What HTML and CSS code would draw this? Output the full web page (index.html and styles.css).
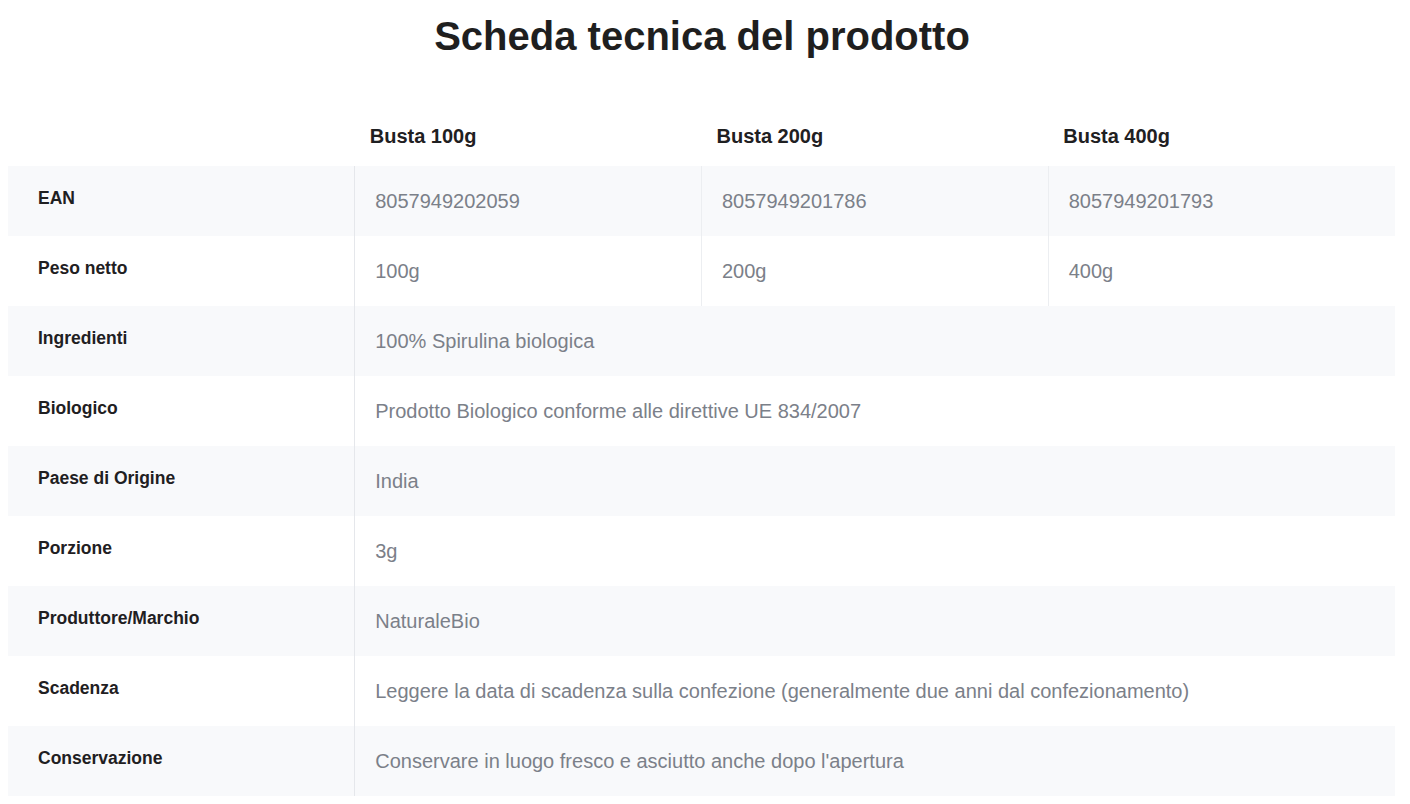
FILE: index.html
```html
<!DOCTYPE html>
<html lang="it">
<head>
<meta charset="utf-8">
<title>Scheda tecnica del prodotto</title>
<link rel="stylesheet" href="styles.css">
</head>
<body>
<h1 class="title">Scheda tecnica del prodotto</h1>
<table class="spec">
  <thead>
    <tr>
      <th class="blank"></th>
      <th>Busta 100g</th>
      <th>Busta 200g</th>
      <th>Busta 400g</th>
    </tr>
  </thead>
  <tbody>
    <tr><td class="label">EAN</td><td class="val">8057949202059</td><td class="val">8057949201786</td><td class="val">8057949201793</td></tr>
    <tr><td class="label">Peso netto</td><td class="val">100g</td><td class="val">200g</td><td class="val">400g</td></tr>
    <tr><td class="label">Ingredienti</td><td class="val" colspan="3">100% Spirulina biologica</td></tr>
    <tr><td class="label">Biologico</td><td class="val" colspan="3">Prodotto Biologico conforme alle direttive UE 834/2007</td></tr>
    <tr><td class="label">Paese di Origine</td><td class="val" colspan="3">India</td></tr>
    <tr><td class="label">Porzione</td><td class="val" colspan="3">3g</td></tr>
    <tr><td class="label">Produttore/Marchio</td><td class="val" colspan="3">NaturaleBio</td></tr>
    <tr><td class="label">Scadenza</td><td class="val" colspan="3">Leggere la data di scadenza sulla confezione (generalmente due anni dal confezionamento)</td></tr>
    <tr><td class="label">Conservazione</td><td class="val" colspan="3">Conservare in luogo fresco e asciutto anche dopo l'apertura</td></tr>
  </tbody>
</table>
</body>
</html>
```

FILE: styles.css
```css
html, body {
  background: #ffffff;
}
body {
  margin: 0 8px;
  font-family: "Liberation Sans", Arial, sans-serif;
  color: #1f2022;
}
.title {
  margin: 13px 0 47px;
  padding-right: 6px;
  font-size: 40px;
  line-height: 46px;
  font-weight: 700;
  text-align: center;
  color: #1f1f1f;
}
.spec {
  width: 1387px;
  border-collapse: collapse;
  table-layout: fixed;
}
.spec th {
  height: 60px;
  padding: 0 15px;
  text-align: left;
  font-size: 20px;
  font-weight: 700;
  color: #1f2022;
  vertical-align: middle;
}
.spec tbody tr {
  height: 70px;
}
.spec tbody tr:nth-child(odd) {
  background: #f8f9fb;
}
.spec td {
  padding: 0;
  vertical-align: middle;
}
.label {
  padding: 0 30px 6px !important;
  font-size: 17.5px;
  font-weight: 700;
  color: #1f2022;
  border-right: 1px solid #e5e7eb;
}
.val {
  padding: 0 20px !important;
  font-size: 20px;
  color: #7b8089;
  border-right: 1px solid #eceef1;
}
.val:last-child {
  border-right: none;
}
```
